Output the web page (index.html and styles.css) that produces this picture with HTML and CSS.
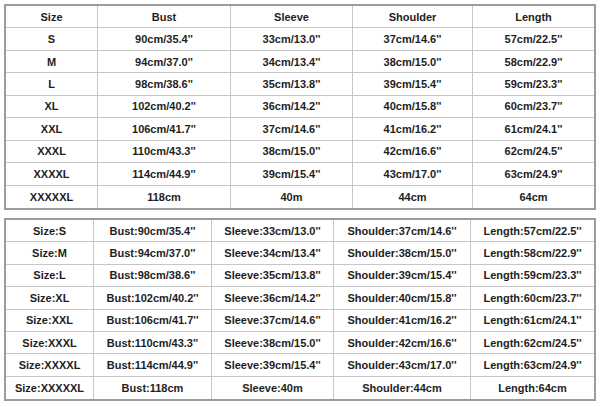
FILE: index.html
```html
<!DOCTYPE html>
<html>
<head>
<meta charset="utf-8">
<link rel="stylesheet" href="styles.css">
</head>
<body>
<div class="page">
  <div class="chart chart-top">
    <div class="c">Size</div><div class="c">Bust</div><div class="c">Sleeve</div><div class="c">Shoulder</div><div class="c">Length</div>
    <div class="c">S</div><div class="c">90cm/35.4''</div><div class="c">33cm/13.0''</div><div class="c">37cm/14.6''</div><div class="c">57cm/22.5''</div>
    <div class="c">M</div><div class="c">94cm/37.0''</div><div class="c">34cm/13.4''</div><div class="c">38cm/15.0''</div><div class="c">58cm/22.9''</div>
    <div class="c">L</div><div class="c">98cm/38.6''</div><div class="c">35cm/13.8''</div><div class="c">39cm/15.4''</div><div class="c">59cm/23.3''</div>
    <div class="c">XL</div><div class="c">102cm/40.2''</div><div class="c">36cm/14.2''</div><div class="c">40cm/15.8''</div><div class="c">60cm/23.7''</div>
    <div class="c">XXL</div><div class="c">106cm/41.7''</div><div class="c">37cm/14.6''</div><div class="c">41cm/16.2''</div><div class="c">61cm/24.1''</div>
    <div class="c">XXXL</div><div class="c">110cm/43.3''</div><div class="c">38cm/15.0''</div><div class="c">42cm/16.6''</div><div class="c">62cm/24.5''</div>
    <div class="c">XXXXL</div><div class="c">114cm/44.9''</div><div class="c">39cm/15.4''</div><div class="c">43cm/17.0''</div><div class="c">63cm/24.9''</div>
    <div class="c last">XXXXXL</div><div class="c last">118cm</div><div class="c last">40m</div><div class="c last">44cm</div><div class="c last">64cm</div>
  </div>
  <div class="chart chart-bottom">
    <div class="c">Size:S</div><div class="c">Bust:90cm/35.4''</div><div class="c">Sleeve:33cm/13.0''</div><div class="c">Shoulder:37cm/14.6''</div><div class="c">Length:57cm/22.5''</div>
    <div class="c">Size:M</div><div class="c">Bust:94cm/37.0''</div><div class="c">Sleeve:34cm/13.4''</div><div class="c">Shoulder:38cm/15.0''</div><div class="c">Length:58cm/22.9''</div>
    <div class="c">Size:L</div><div class="c">Bust:98cm/38.6''</div><div class="c">Sleeve:35cm/13.8''</div><div class="c">Shoulder:39cm/15.4''</div><div class="c">Length:59cm/23.3''</div>
    <div class="c">Size:XL</div><div class="c">Bust:102cm/40.2''</div><div class="c">Sleeve:36cm/14.2''</div><div class="c">Shoulder:40cm/15.8''</div><div class="c">Length:60cm/23.7''</div>
    <div class="c">Size:XXL</div><div class="c">Bust:106cm/41.7''</div><div class="c">Sleeve:37cm/14.6''</div><div class="c">Shoulder:41cm/16.2''</div><div class="c">Length:61cm/24.1''</div>
    <div class="c">Size:XXXL</div><div class="c">Bust:110cm/43.3''</div><div class="c">Sleeve:38cm/15.0''</div><div class="c">Shoulder:42cm/16.6''</div><div class="c">Length:62cm/24.5''</div>
    <div class="c">Size:XXXXL</div><div class="c">Bust:114cm/44.9''</div><div class="c">Sleeve:39cm/15.4''</div><div class="c">Shoulder:43cm/17.0''</div><div class="c">Length:63cm/24.9''</div>
    <div class="c last">Size:XXXXXL</div><div class="c last">Bust:118cm</div><div class="c last">Sleeve:40m</div><div class="c last">Shoulder:44cm</div><div class="c last">Length:64cm</div>
  </div>
</div>
</body>
</html>
```

FILE: styles.css
```css
* { box-sizing: border-box; }
html, body { margin: 0; padding: 0; background: #ffffff; }
body {
  font-family: "Liberation Sans", Arial, sans-serif;
  font-weight: bold;
  font-size: 11px;
  color: #1e1e1e;
}
.page {
  width: 600px;
  height: 407px;
  padding: 4px;
  display: flex;
  flex-direction: column;
  gap: 8px;
}
.chart {
  width: 592px;
  display: grid;
  border: 2px solid #9c9c9c;
  background: #ffffff;
}
.chart-top {
  height: 206px;
  grid-template-columns: 92px 133px 122px 120px 121px;
  grid-template-rows: repeat(9, 1fr);
}
.chart-bottom {
  height: 183px;
  grid-template-columns: 88px 118px 122px 137px 123px;
  grid-template-rows: repeat(8, 1fr);
}
.c {
  display: flex;
  align-items: center;
  justify-content: center;
  white-space: nowrap;
  border-right: 1px solid #c6c6c6;
  border-bottom: 1px solid #c6c6c6;
}
.c:nth-child(5n) { border-right: none; }
.c.last { border-bottom: none; }
```
